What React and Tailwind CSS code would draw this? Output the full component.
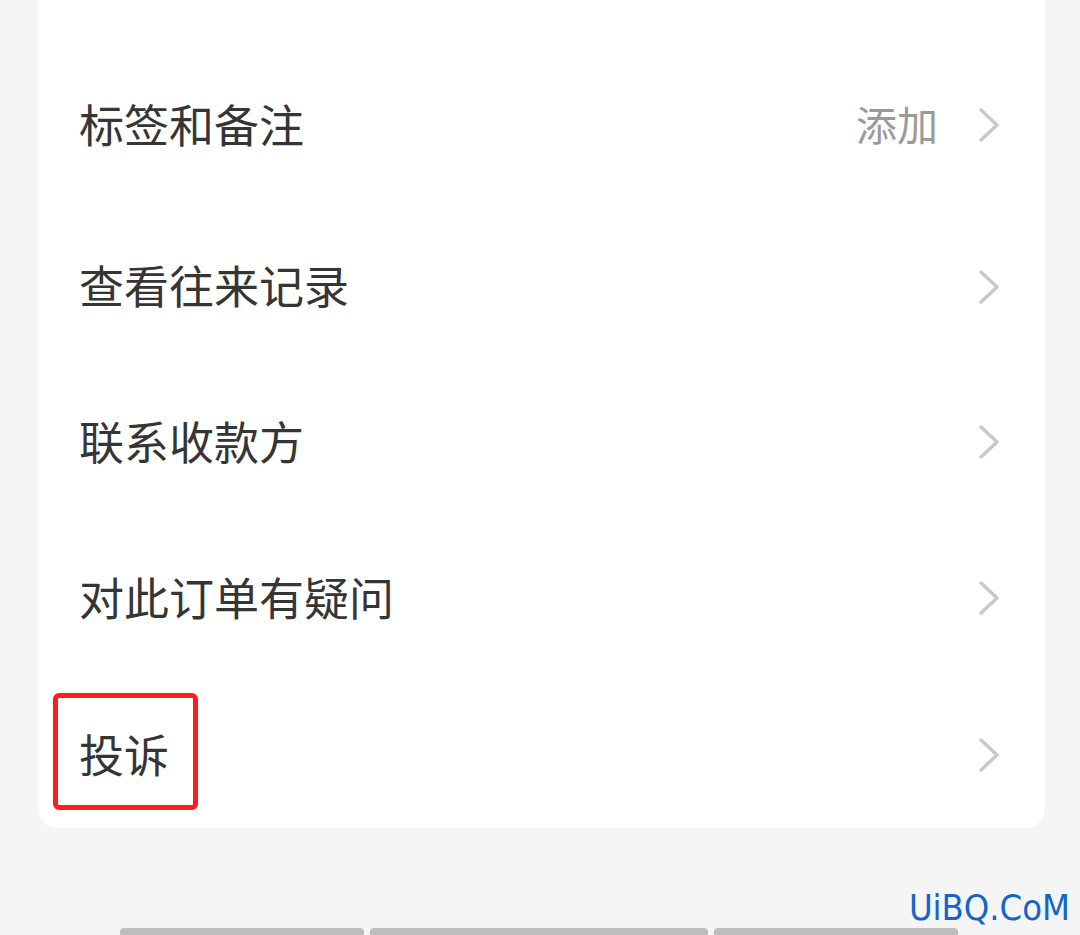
const rows = [
  { label: '标签和备注', extra: '添加', cls: 'h-[162px] pb-[6px]' },
  { label: '查看往来记录', cls: 'h-[155px]' },
  { label: '联系收款方', cls: 'h-[156px]' },
  { label: '对此订单有疑问', cls: 'h-[156px]' },
  { label: '投诉', marked: true, cls: 'h-[154px] pt-[4px]' },
];

function Chevron() {
  return (
    <svg width="22" height="36" viewBox="0 0 22 36" fill="none" className="mt-[4px] shrink-0">
      <path d="M3 3 L19 18 L3 33" stroke="#c9c9c9" strokeWidth="3.5" strokeLinecap="round" strokeLinejoin="round" />
    </svg>
  );
}

function Row({ label, extra, marked, cls }) {
  return (
    <div className={'relative flex items-center pl-[41px] pr-[45px] ' + cls}>
      <span className="flex-1 text-[45px] leading-none text-[#353535]">{label}</span>
      {extra && <span className="mr-[40px] text-[41px] leading-none text-[#9a9a9a]">{extra}</span>}
      <Chevron />
      {marked && (
        <div className="absolute left-[15px] top-[19px] h-[117px] w-[145px] rounded-[6px] border-[5px] border-[#ff1f1a]" />
      )}
    </div>
  );
}

export default function App() {
  return (
    <div
      className="relative h-[935px] w-[1080px] overflow-hidden bg-[#f5f5f5]"
      style={{ fontFamily: '"Noto Sans CJK SC", "Noto Sans", sans-serif' }}
    >
      <div className="ml-[38px] w-[1007px] rounded-b-[20px] bg-white pt-[45px]">
        {rows.map((r) => (
          <Row key={r.label} {...r} />
        ))}
      </div>

      <div className="mt-[100px] ml-[120px] flex gap-[6px]">
        <div className="h-[10px] w-[244px] rounded-t-[4px] bg-[#bdbdbd]" />
        <div className="h-[10px] w-[338px] rounded-t-[4px] bg-[#bdbdbd]" />
        <div className="h-[10px] w-[244px] rounded-t-[4px] bg-[#bdbdbd]" />
      </div>

      <div
        className="absolute right-[10px] top-[890px] text-[36px] leading-none text-[#1565c8]"
        style={{ fontFamily: '"DejaVu Sans Condensed", "Liberation Sans", sans-serif' }}
      >
        UiBQ.CoM
      </div>
    </div>
  );
}
